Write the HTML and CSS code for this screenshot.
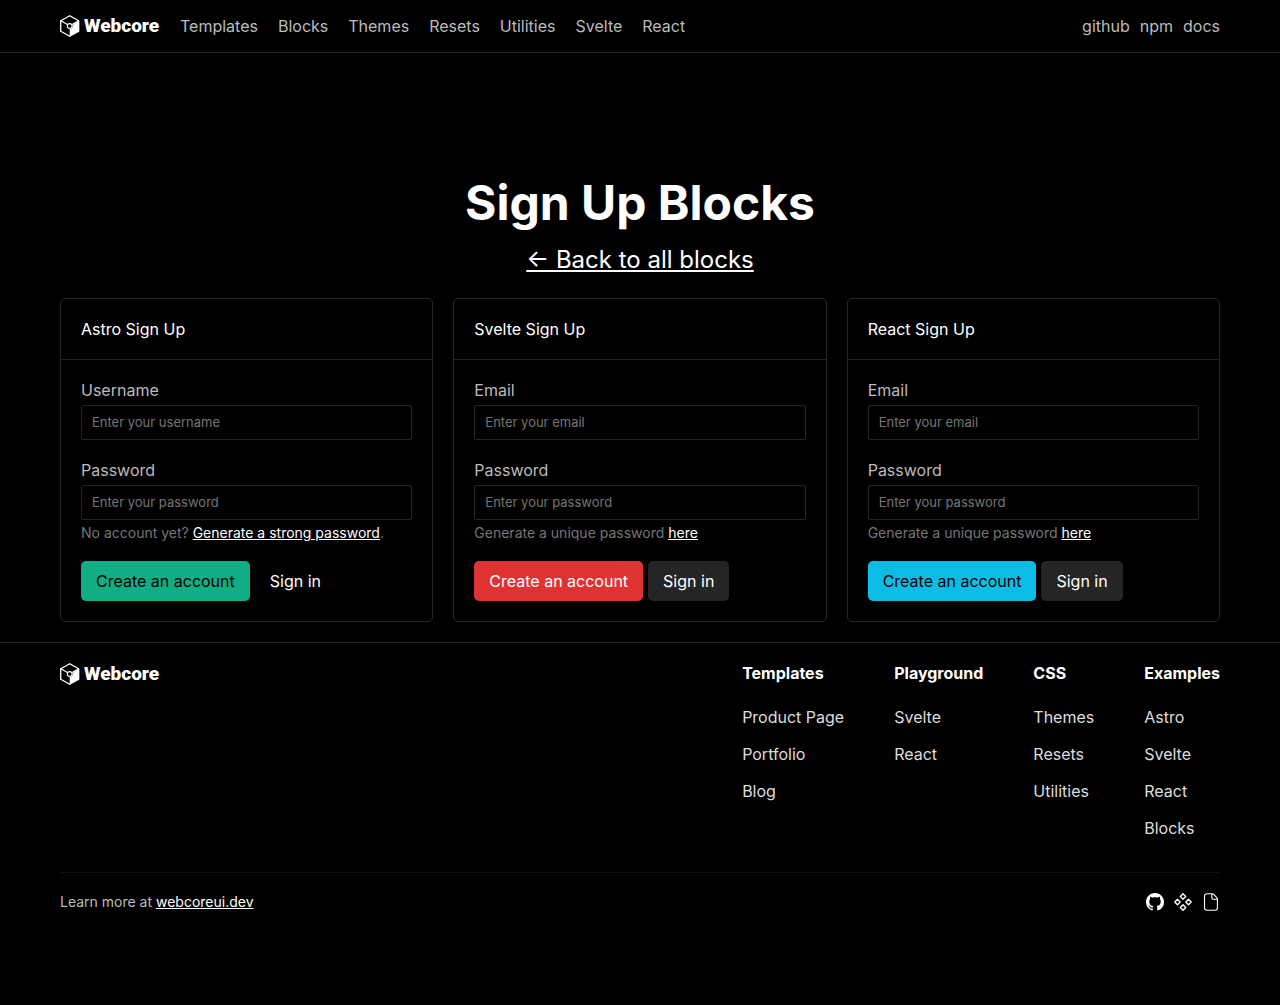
FILE: index.html
```html
<!DOCTYPE html>
<html lang="en">
<head>
<meta charset="utf-8">
<meta name="viewport" content="width=device-width, initial-scale=1">
<title>Sign Up Blocks | Webcore</title>
<link rel="stylesheet" href="styles.css">
</head>
<body>
<svg class="sprite" width="0" height="0" aria-hidden="true">
  <symbol id="cube" viewBox="0 0 20 22">
    <path d="M9.700.7 18.700 5.800v10.400l-9 5.100-9-5.100V5.800z" fill="none" stroke="currentColor" stroke-width="1.300" stroke-linejoin="round"/>
    <path d="M.7 5.800 7.500 9.600M18.700 5.800 12 9.600" fill="none" stroke="currentColor" stroke-width="1.100"/>
    <path d="M18.700 5.800v10.400l-9 5.100v-7.300c1.900 0 3.400-1.500 3-4z" fill="currentColor"/>
    <circle cx="9.700" cy="11" r="2.400" fill="#000" stroke="currentColor" stroke-width="1.100"/>
  </symbol>
</svg>
<header class="header">
  <div class="container header-row">
    <a class="logo" href="#"><svg class="logo-mark" aria-hidden="true"><use href="#cube"/></svg><span>Webcore</span></a>
    <nav class="nav" aria-label="Main">
      <a href="#">Templates</a>
      <a href="#">Blocks</a>
      <a href="#">Themes</a>
      <a href="#">Resets</a>
      <a href="#">Utilities</a>
      <a href="#">Svelte</a>
      <a href="#">React</a>
    </nav>
    <nav class="nav nav-side" aria-label="Resources">
      <a href="#">github</a>
      <a href="#">npm</a>
      <a href="#">docs</a>
    </nav>
  </div>
</header>
<main class="container main">
  <h1 class="title">Sign Up Blocks</h1>
  <a class="back" href="#">← Back to all blocks</a>
  <div class="cards">
    <section class="card">
      <h2 class="card-title">Astro Sign Up</h2>
      <form class="form">
        <div class="field">
          <label for="astro-user">Username</label>
          <input id="astro-user" type="text" placeholder="Enter your username">
        </div>
        <div class="field">
          <label for="astro-pass">Password</label>
          <input id="astro-pass" type="password" placeholder="Enter your password">
          <p class="hint">No account yet? <a href="#">Generate a strong password</a>.</p>
        </div>
        <div class="actions">
          <button class="button green" type="button">Create an account</button>
          <button class="button plain" type="button">Sign in</button>
        </div>
      </form>
    </section>
    <section class="card">
      <h2 class="card-title">Svelte Sign Up</h2>
      <form class="form">
        <div class="field">
          <label for="svelte-email">Email</label>
          <input id="svelte-email" type="email" placeholder="Enter your email">
        </div>
        <div class="field">
          <label for="svelte-pass">Password</label>
          <input id="svelte-pass" type="password" placeholder="Enter your password">
          <p class="hint">Generate a unique password <a href="#">here</a></p>
        </div>
        <div class="actions">
          <button class="button red" type="button">Create an account</button>
          <button class="button gray" type="button">Sign in</button>
        </div>
      </form>
    </section>
    <section class="card">
      <h2 class="card-title">React Sign Up</h2>
      <form class="form">
        <div class="field">
          <label for="react-email">Email</label>
          <input id="react-email" type="email" placeholder="Enter your email">
        </div>
        <div class="field">
          <label for="react-pass">Password</label>
          <input id="react-pass" type="password" placeholder="Enter your password">
          <p class="hint">Generate a unique password <a href="#">here</a></p>
        </div>
        <div class="actions">
          <button class="button blue" type="button">Create an account</button>
          <button class="button gray" type="button">Sign in</button>
        </div>
      </form>
    </section>
  </div>
</main>
<footer class="footer">
  <div class="container">
    <div class="footer-top">
      <a class="logo" href="#"><svg class="logo-mark" aria-hidden="true"><use href="#cube"/></svg><span>Webcore</span></a>
      <div class="columns">
        <div>
          <strong class="column-title">Templates</strong>
          <ul class="links">
            <li><a href="#">Product Page</a></li>
            <li><a href="#">Portfolio</a></li>
            <li><a href="#">Blog</a></li>
          </ul>
        </div>
        <div>
          <strong class="column-title">Playground</strong>
          <ul class="links">
            <li><a href="#">Svelte</a></li>
            <li><a href="#">React</a></li>
          </ul>
        </div>
        <div>
          <strong class="column-title">CSS</strong>
          <ul class="links">
            <li><a href="#">Themes</a></li>
            <li><a href="#">Resets</a></li>
            <li><a href="#">Utilities</a></li>
          </ul>
        </div>
        <div>
          <strong class="column-title">Examples</strong>
          <ul class="links">
            <li><a href="#">Astro</a></li>
            <li><a href="#">Svelte</a></li>
            <li><a href="#">React</a></li>
            <li><a href="#">Blocks</a></li>
          </ul>
        </div>
      </div>
    </div>
    <div class="footer-bottom">
      <p class="learn">Learn more at <a href="#">webcoreui.dev</a></p>
      <div class="socials">
        <a href="#" aria-label="GitHub"><svg viewBox="0 0 16 16" fill="currentColor"><path d="M8 0C3.580 0 0 3.580 0 8c0 3.540 2.290 6.530 5.470 7.590.4.070.550-.170.550-.380 0-.190-.010-.820-.010-1.490-2.010.370-2.530-.490-2.690-.940-.090-.230-.480-.940-.820-1.130-.280-.150-.680-.520-.010-.530.630-.010 1.080.580 1.230.820.720 1.210 1.870.870 2.330.660.070-.520.280-.870.510-1.070-1.780-.2-3.640-.890-3.640-3.950 0-.870.310-1.590.820-2.150-.080-.2-.360-1.020.080-2.120 0 0 .670-.210 2.200.820.640-.180 1.320-.270 2-.270s1.360.090 2 .270c1.530-1.040 2.200-.820 2.200-.820.440 1.100.160 1.920.080 2.120.510.560.820 1.270.820 2.150 0 3.070-1.870 3.750-3.650 3.950.290.250.540.730.540 1.480 0 1.070-.010 1.930-.010 2.200 0 .210.150.460.550.380A8.010 8.010 0 0 0 16 8c0-4.420-3.580-8-8-8z"/></svg></a>
        <a href="#" aria-label="Components"><svg viewBox="0 0 18 18" fill="none" stroke="currentColor" stroke-width="1.3" stroke-linejoin="round"><path d="m9 .8 2.700 2.700L9 6.200 6.300 3.500zM9 11.800l2.700 2.700L9 17.200l-2.700-2.700zM3.500 6.300 6.200 9l-2.700 2.700L.8 9zM14.500 6.300 17.200 9l-2.700 2.700L11.800 9z"/></svg></a>
        <a href="#" aria-label="Documentation"><svg viewBox="0 0 18 18" fill="none" stroke="currentColor" stroke-width="1.1" stroke-linejoin="round"><path d="M5 .7h5.200c.6 0 1.100.2 1.500.6l3.100 3.400c.4.400.6.900.6 1.500v8.600a2.500 2.500 0 0 1-2.500 2.500H5a2.500 2.500 0 0 1-2.500-2.500V3.200A2.500 2.500 0 0 1 5 .7zM9.800.9v3.600A1.800 1.800 0 0 0 11.600 6.300h3.600"/></svg></a>
      </div>
    </div>
  </div>
</footer>
</body>
</html>
```
FILE: styles.css
```css
* { box-sizing: border-box; }
body {
  margin: 0;
  background: #000;
  color: #fff;
  font-family: Inter, "Liberation Sans", sans-serif;
  font-size: 16px;
  line-height: 24px;
}
a { color: inherit; }
p, h1, h2, ul { margin: 0; padding: 0; }
.sprite { position: absolute; }
.container {
  max-width: 1200px;
  margin: 0 auto;
  padding: 0 20px;
}
.header { border-bottom: 1px solid #252525; }
.header-row {
  display: flex;
  align-items: center;
  gap: 20px;
  height: 52px;
}
.logo {
  display: flex;
  align-items: center;
  gap: 4px;
  width: 100px;
  height: 22px;
  font: 900 19px/22px Roboto, sans-serif;
  text-decoration: none;
}
.logo-mark { flex: none; width: 20px; height: 22px; }
.nav { display: flex; gap: 20px; color: #bbb; }
.nav a { text-decoration: none; }
.nav-side { gap: 10px; margin-left: auto; }
.main {
  display: flex;
  flex-direction: column;
  align-items: center;
  padding-top: 120px;
  padding-bottom: 20px;
}
.title { font-size: 48px; line-height: 60px; font-weight: 700; }
.back { margin-top: 9px; font-size: 24px; line-height: 36px; }
.cards {
  display: grid;
  grid-template-columns: repeat(3, 1fr);
  gap: 20px;
  width: 100%;
  margin-top: 20px;
}
.card { border: 1px solid #252525; border-radius: 5px; }
.card-title {
  padding: 18px 20px;
  border-bottom: 1px solid #252525;
  font-size: 16px;
  line-height: 24px;
  font-weight: 400;
}
.form {
  display: flex;
  flex-direction: column;
  gap: 18px;
  padding: 18px 20px 20px;
}
.field { display: flex; flex-direction: column; }
.field label { margin-bottom: 3px; color: #bbb; }
.field input {
  height: 35px;
  padding: 0 10px 2px;
  border: 1px solid #252525;
  border-radius: 2px;
  background: #000;
  color: #fff;
  font-family: inherit;
  font-size: 13px;
}
.field input::placeholder { color: #757575; }
.hint { margin-top: 3px; color: #757575; font-size: 14px; line-height: 20px; }
.hint a { color: #fff; }
.actions { display: flex; gap: 5px; }
.button {
  height: 40px;
  padding: 0 15px;
  border: 0;
  border-radius: 5px;
  color: #fff;
  font-family: inherit;
  font-size: 16px;
}
.green { background: #11ad84; color: #000; }
.red { background: #df3333; }
.blue { background: #0bbde5; color: #000; }
.gray { background: #252525; }
.plain { background: none; }
.footer { border-top: 1px solid #252525; }
.footer-top {
  display: flex;
  justify-content: space-between;
  padding: 20px 0 33px;
  border-bottom: 1px solid #111;
}
.columns { display: flex; gap: 50px; line-height: 22px; }
.column-title { display: block; margin-bottom: 23px; line-height: 20px; }
.links { display: grid; gap: 15px; list-style: none; color: #ddd; }
.links a { text-decoration: none; }
.footer-bottom {
  display: flex;
  justify-content: space-between;
  align-items: center;
  padding: 17px 0;
}
.learn { color: #bbb; font-size: 14px; }
.learn a { color: #fff; }
.socials { display: flex; gap: 10px; }
.socials a { display: flex; }
.socials svg { width: 18px; height: 18px; }
```
